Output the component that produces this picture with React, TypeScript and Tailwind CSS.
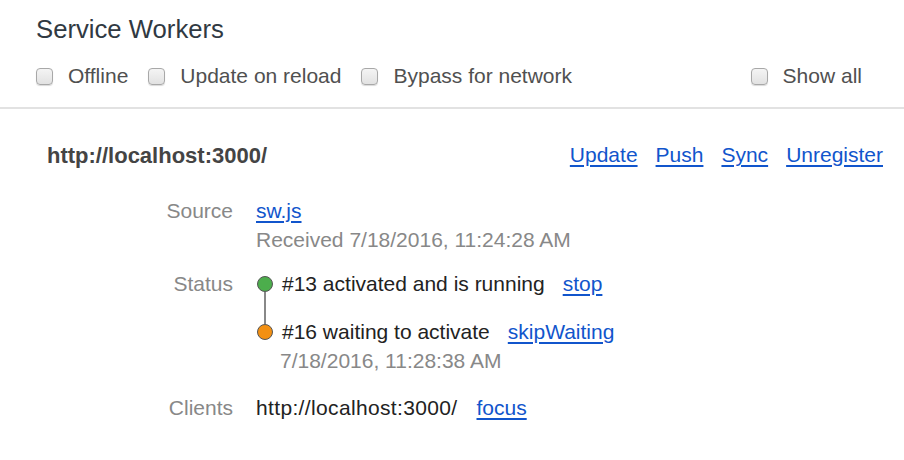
import React from 'react';

const font = { fontFamily: '"Liberation Sans", Arial, sans-serif' };

function Checkbox({ label }: { label: string }) {
    return (
        <label className="flex items-center gap-[15px] text-[21px] text-[#505050]">
            <span className="w-[17px] h-[17px] rounded-[4px] border border-[#a8a8a8] bg-gradient-to-b from-[#f4f4f4] to-[#e2e2e2] shadow-[0_1px_1px_rgba(0,0,0,0.15)]" />
            {label}
        </label>
    );
}

function Link({ children }: { children: React.ReactNode }) {
    return <a className="text-[#1155cc] underline underline-offset-[3px] cursor-pointer">{children}</a>;
}

export default function App() {
    return (
        <div className="w-[904px] h-[460px] bg-white overflow-hidden" style={font}>
            {/* Header */}
            <div className="border-b-2 border-[#e2e2e2] pl-[36px] pr-[42px] pt-[14px] pb-[16px]">
                <h1 className="text-[25.7px] leading-[30px] text-[#303942]">Service Workers</h1>
                <div className="mt-[17px] h-[30px] flex items-center">
                    <div className="flex items-center gap-[20px]">
                        <Checkbox label="Offline" />
                        <Checkbox label="Update on reload" />
                        <Checkbox label="Bypass for network" />
                    </div>
                    <div className="ml-auto">
                        <Checkbox label="Show all" />
                    </div>
                </div>
            </div>

            {/* Worker */}
            <div className="pl-[47px] pr-[21px] pt-[31px]">
                <div className="h-[30px] flex items-center">
                    <span className="text-[22px] font-bold text-[#444]">http://localhost:3000/</span>
                    <div className="ml-auto flex gap-[18px] text-[21px]">
                        <Link>Update</Link>
                        <Link>Push</Link>
                        <Link>Sync</Link>
                        <Link>Unregister</Link>
                    </div>
                </div>

                <div className="mt-[26px] grid grid-cols-[186px_1fr] gap-x-[23px] text-[21px] leading-[29px]">
                    <div className="text-right text-[#888]">Source</div>
                    <div>
                        <div><Link>sw.js</Link></div>
                        <div className="text-[#888]">Received 7/18/2016, 11:24:28 AM</div>
                    </div>

                    <div className="mt-[15px] text-right text-[#888]">Status</div>
                    <div className="mt-[15px] flex gap-[9px]">
                        <div className="w-[17px] flex flex-col items-center pt-[7px]">
                            <span className="w-[16px] h-[16px] rounded-full bg-[#4cad4c] border border-[#555]" />
                            <span className="w-[2px] h-[32px] bg-[#888]" />
                            <span className="w-[16px] h-[16px] rounded-full bg-[#f39012] border border-[#555]" />
                        </div>
                        <div className="text-[#222]">
                            <div className="flex gap-[18px]">
                                <span>#13 activated and is running</span>
                                <Link>stop</Link>
                            </div>
                            <div className="mt-[19px] flex gap-[18px]">
                                <span>#16 waiting to activate</span>
                                <Link>skipWaiting</Link>
                            </div>
                            <div className="-ml-[2px] text-[#888]">7/18/2016, 11:28:38 AM</div>
                        </div>
                    </div>

                    <div className="mt-[18px] text-right text-[#888]">Clients</div>
                    <div className="mt-[18px] flex gap-[19px] text-[#222]">
                        <span className="tracking-[0.35px]">http://localhost:3000/</span>
                        <Link>focus</Link>
                    </div>
                </div>
            </div>
        </div>
    );
}
